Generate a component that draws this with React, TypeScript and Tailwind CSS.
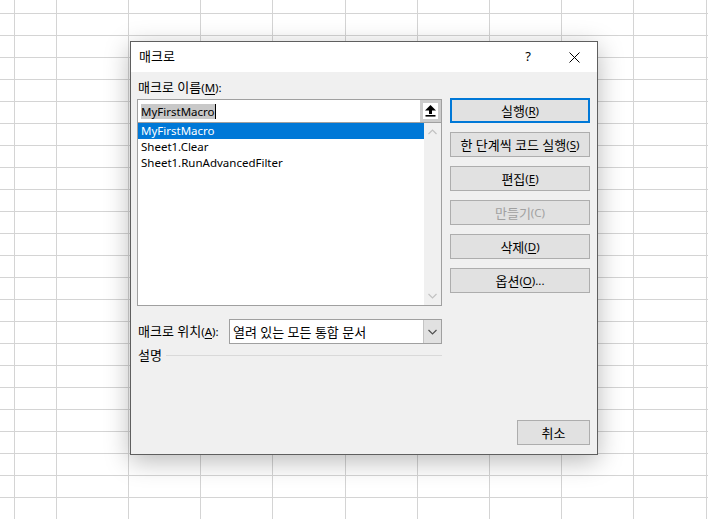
import type { ReactNode } from 'react';

const FONT = "font-['Noto_Sans','Noto_Sans_CJK_KR',sans-serif]";

function U({ children }: { children: ReactNode }) {
    return <span className="underline underline-offset-[2px]">{children}</span>;
}

// Hangul runs are drawn a touch larger, like Malgun Gothic next to Segoe UI
function K({ children }: { children: ReactNode }) {
    return <span className="text-[13px]">{children}</span>;
}

function Sheet() {
    const cells = Array.from({ length: 12 * 24 });
    return (
        <div className="grid grid-cols-[15px_42px_72px_72px_72px_73px_72px_72px_72px_72px_73px_10px] grid-rows-[14px_repeat(23,22px)] w-[708px] h-[519px] overflow-hidden bg-white">
            {cells.map((_, i) => (
                <div key={i} className="border-r border-b border-[#d4d4d4]" />
            ))}
        </div>
    );
}

function Btn({ children, primary, disabled, wide = true }: { children: ReactNode; primary?: boolean; disabled?: boolean; wide?: boolean }) {
    return (
        <div
            className={
                (wide ? 'w-[140px] ' : 'w-[73px] ') +
                'h-[25px] flex items-center justify-center bg-[#e1e1e1] text-[11.5px] leading-[16px] ' +
                (primary ? 'border-2 border-[#0078d7] ' : 'border border-[#adadad] ') +
                (disabled ? 'text-[#a0a0a0]' : 'text-black')
            }
        >
            {children}
        </div>
    );
}

function UpArrow() {
    return (
        <svg width="11" height="12" viewBox="0 0 11 12">
            <polygon points="5.5,0 11,5.5 0,5.5" fill="#000" />
            <rect x="4" y="5" width="3" height="4" fill="#000" />
            <rect x="0.5" y="10" width="10" height="1.6" fill="#000" />
        </svg>
    );
}

function Chevron({ up, color }: { up?: boolean; color: string }) {
    return (
        <svg width="9" height="6" viewBox="0 0 9 6">
            <polyline
                points={up ? '0.5,5 4.5,1 8.5,5' : '0.5,1 4.5,5 8.5,1'}
                fill="none"
                stroke={color}
                strokeWidth="1.2"
            />
        </svg>
    );
}

function Dialog() {
    return (
        <div className={`absolute left-[130px] top-[41px] w-[468px] h-[414px] border border-[#5f5f5f] bg-[#f0f0f0] flex flex-col shadow-[0_6px_24px_rgba(0,0,0,0.28)] ${FONT}`}>
            {/* title bar */}
            <div className="h-[30px] bg-white flex items-center">
                <span className="pl-[8px] text-[13px] text-black flex-1">매크로</span>
                <div className="w-[46px] h-full flex items-center justify-center text-[13px] text-black">?</div>
                <div className="w-[46px] h-full flex items-center justify-center">
                    <svg width="11" height="11" viewBox="0 0 11 11">
                        <path d="M0.5 0.5 L10.5 10.5 M10.5 0.5 L0.5 10.5" stroke="#000" strokeWidth="1" />
                    </svg>
                </div>
            </div>

            {/* body */}
            <div className="flex-1 flex flex-col text-[11.5px] leading-[16px] text-black">
                <div className="flex">
                    <div className="ml-[6px] w-[305px] flex flex-col">
                        <div className="mt-[7px] pl-[1px] h-[16px]">
                            <K>매크로 이름</K>(<U>M</U>):
                        </div>
                        {/* name input */}
                        <div className="mt-[4px] h-[23px] border-x border-t border-[#a0a0a0] bg-white flex">
                            <div className="flex-1 flex items-center pl-[3px]">
                                <span className="bg-[#c8c8c8] leading-[15px]">MyFirstMacro</span>
                                <span className="w-px h-[15px] bg-black" />
                            </div>
                            <div className="w-[21px] h-full bg-[#cccccc] p-[3px]">
                                <div className="w-full h-full bg-white flex items-center justify-center">
                                    <UpArrow />
                                </div>
                            </div>
                        </div>
                        {/* list */}
                        <div className="h-[184px] border border-[#a0a0a0] bg-white flex">
                            <div className="flex-1 flex flex-col">
                                <div className="h-[16px] bg-[#0078d7] text-white pl-[3px]">MyFirstMacro</div>
                                <div className="h-[16px] pl-[3px]">Sheet1.Clear</div>
                                <div className="h-[16px] pl-[3px]">Sheet1.RunAdvancedFilter</div>
                            </div>
                            <div className="w-[17px] bg-[#f0f0f0] flex flex-col items-center justify-between py-[6px]">
                                <Chevron up color="#c2c2c2" />
                                <Chevron color="#c2c2c2" />
                            </div>
                        </div>
                        {/* location */}
                        <div className="mt-[13px] flex items-center">
                            <span className="pl-[1px] w-[92px]">
                                <K>매크로 위치</K>(<U>A</U>):
                            </span>
                            <div className="w-[213px] h-[25px] border border-[#a0a0a0] bg-white flex">
                                <div className="flex-1 flex items-center pl-[3px]">
                                    <K>열려 있는 모든 통합 문서</K>
                                </div>
                                <div className="w-[18px] bg-[#e1e1e1] border-l border-[#c4c4c4] flex items-center justify-center">
                                    <Chevron color="#505050" />
                                </div>
                            </div>
                        </div>
                        {/* description */}
                        <div className="mt-[3px] flex items-center">
                            <span className="pl-[1px]">
                                <K>설명</K>
                            </span>
                            <div className="flex-1 ml-[4px] h-px bg-[#d9d9d9]" />
                        </div>
                    </div>

                    <div className="ml-[8px] mt-[26px] flex flex-col gap-[9px]">
                        <Btn primary>
                            <K>실행</K>(<U>R</U>)
                        </Btn>
                        <Btn>
                            <K>한 단계씩 코드 실행</K>(<U>S</U>)
                        </Btn>
                        <Btn>
                            <K>편집</K>(<U>E</U>)
                        </Btn>
                        <Btn disabled>
                            <K>만들기</K>(C)
                        </Btn>
                        <Btn>
                            <K>삭제</K>(<U>D</U>)
                        </Btn>
                        <Btn>
                            <K>옵션</K>(<U>O</U>)...
                        </Btn>
                    </div>
                </div>

                <div className="flex-1" />
                <div className="flex justify-end mr-[7px] mb-[9px]">
                    <Btn wide={false}>
                        <K>취소</K>
                    </Btn>
                </div>
            </div>
        </div>
    );
}

export default function App() {
    return (
        <div className="relative w-[708px] h-[519px] overflow-hidden">
            <Sheet />
            <Dialog />
        </div>
    );
}
